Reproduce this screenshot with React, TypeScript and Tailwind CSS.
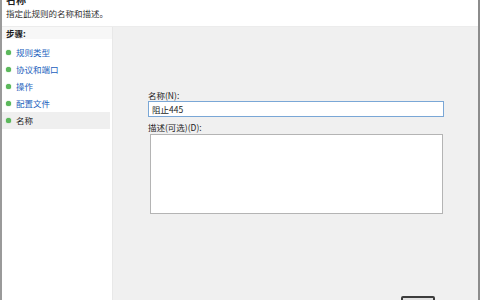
const steps = ["规则类型", "协议和端口", "操作", "配置文件", "名称"];

const font = { fontFamily: '"Noto Sans CJK SC", "Liberation Sans", sans-serif' };

export default function App() {
  return (
    <div
      className="w-[480px] h-[300px] overflow-hidden bg-white flex flex-col border-l-2 border-l-[#9a9a9a] border-r-2 border-r-[#8c8c8c] text-[#1e1e1e]"
      style={font}
    >
      {/* Header */}
      <div className="h-[27px] shrink-0 px-[4px] flex flex-col border-b border-[#ececec]">
        <div className="text-[10px] font-bold leading-[12px] -mt-[6px]">名称</div>
        <div className="text-[8.5px] leading-[12px] mt-[1px] text-[#333]">指定此规则的名称和描述。</div>
      </div>

      <div className="flex flex-1 min-h-0">
        {/* Steps */}
        <div className="w-[111px] shrink-0 flex flex-col bg-white border-r border-[#e8e8e8]">
          <div className="h-[12px] shrink-0 px-[4px] bg-[#f7f7f7] text-[8.5px] font-bold leading-[12px]">步骤:</div>
          <div className="flex flex-col mt-[5px]">
            {steps.map((s, i) => {
              const active = i === steps.length - 1;
              return (
                <div
                  key={s}
                  className={`h-[17px] shrink-0 flex items-center gap-[5px] pl-[4px] mr-[2px] text-[8.5px] ${
                    active ? "bg-[#efefef] text-[#1e1e1e]" : "text-[#1b5fbd]"
                  }`}
                >
                  <span className="w-[5px] h-[5px] rounded-full bg-[#5cb85c] shadow-[0_0_1px_#3a3]" />
                  <span>{s}</span>
                </div>
              );
            })}
          </div>
        </div>

        {/* Form panel */}
        <div className="flex-1 bg-[#f0f0f0] flex flex-col pl-[35px] pr-[34px] pt-[62px] overflow-hidden">
          <div className="shrink-0 text-[8.5px] leading-[12px] text-[#222]">名称(N):</div>
          <div className="shrink-0 h-[16px] mt-[0px] border border-[#7aa7d6] bg-white flex items-center px-[3px] text-[8.5px]">
            阻止445
          </div>
          <div className="shrink-0 text-[8.5px] leading-[12px] mt-[4px] text-[#222]">描述(可选)(D):</div>
          <div className="shrink-0 h-[80px] mt-[1px] ml-[2px] mr-[1px] border border-[#b4b4b4] bg-white" />
          <div className="shrink-0 flex justify-end mt-[82px] mr-[9px]">
            <div className="w-[34px] h-[20px] rounded-[2px] border-2 border-[#3c3c3c] bg-[#e1e1e1]" />
          </div>
        </div>
      </div>
    </div>
  );
}
